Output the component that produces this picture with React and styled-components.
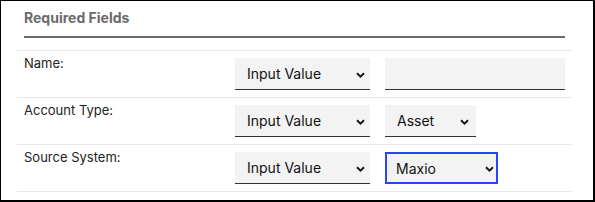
import React from 'react';
import styled, { createGlobalStyle } from 'styled-components';

const GlobalStyle = createGlobalStyle`
  body {
    margin: 0;
    background: #ffffff;
    font-family: 'Inter', 'Liberation Sans', sans-serif;
  }
`;

const Frame = styled.section`
  width: 595px;
  height: 202px;
  box-sizing: border-box;
  border-style: solid;
  border-color: #000;
  border-width: 1px 2px 2px 1px;
  padding: 8px 21px 0 16px;
  background: #fff;
`;

const Heading = styled.h3`
  margin: 0 7px 12px;
  padding-bottom: 9px;
  border-bottom: 2px solid #6b6b6b;
  font-size: 14px;
  line-height: 18px;
  font-weight: 700;
  color: #6b6b6b;
`;

const Rows = styled.div`
  border-top: 1px solid #e8e8e8;
`;

const Row = styled.div`
  display: flex;
  align-items: flex-start;
  padding: 4px 7px 7px;
  border-bottom: 1px solid #e8e8e8;
`;

const Label = styled.div`
  width: 211px;
  flex-shrink: 0;
  font-size: 13px;
  line-height: 16px;
  color: #222;
`;

const Controls = styled.div`
  display: flex;
  gap: 15px;
  margin-top: 3px;
`;

const SelectWrap = styled.div`
  position: relative;
  width: ${(p) => p.$width}px;
  height: 32px;
`;

const Select = styled.select`
  appearance: none;
  -webkit-appearance: none;
  width: 100%;
  height: 100%;
  box-sizing: border-box;
  margin: 0;
  padding: 0 24px 0 ${(p) => (p.$focused ? 9 : 12)}px;
  background: #f3f3f3;
  border: none;
  border-bottom: 1px solid #333;
  border-radius: 0;
  font-family: 'Inter', 'Liberation Sans', sans-serif;
  font-size: 14px;
  color: #111;
  outline: none;
  ${(p) => p.$focused && `border: 2px solid #2b45f2;`}
`;

const Chevron = styled.svg`
  position: absolute;
  right: ${(p) => p.$right}px;
  top: 14px;
  width: 9px;
  height: 6px;
  pointer-events: none;
`;

const TextInput = styled.input`
  width: 180px;
  height: 32px;
  box-sizing: border-box;
  margin: 0;
  padding: 0 12px;
  background: #f3f3f3;
  border: none;
  border-bottom: 1px solid #333;
  border-radius: 0;
  font-family: 'Inter', 'Liberation Sans', sans-serif;
  font-size: 14px;
  outline: none;
`;

const DropDown = ({ width, value, options, focused, chevronRight = 5 }) => (
  <SelectWrap $width={width}>
    <Select $focused={focused} defaultValue={value}>
      {options.map((o) => (
        <option key={o}>{o}</option>
      ))}
    </Select>
    <Chevron $right={chevronRight} viewBox="0 0 9 6">
      <path d="M1 1.2 L4.5 4.6 L8 1.2" fill="none" stroke="#111" strokeWidth="1.9" />
    </Chevron>
  </SelectWrap>
);

const sourceOptions = ['Input Value', 'Mapped Field'];

const App = () => (
  <>
    <GlobalStyle />
    <Frame>
      <Heading>Required Fields</Heading>
      <Rows>
        <Row>
          <Label>Name:</Label>
          <Controls>
            <DropDown width={135} value="Input Value" options={sourceOptions} />
            <TextInput type="text" />
          </Controls>
        </Row>
        <Row>
          <Label>Account Type:</Label>
          <Controls>
            <DropDown width={135} value="Input Value" options={sourceOptions} />
            <DropDown width={91} value="Asset" options={['Asset', 'Liability', 'Equity']} chevronRight={7} />
          </Controls>
        </Row>
        <Row>
          <Label>Source System:</Label>
          <Controls>
            <DropDown width={135} value="Input Value" options={sourceOptions} />
            <DropDown width={113} value="Maxio" options={['Maxio', 'Other']} focused chevronRight={4} />
          </Controls>
        </Row>
      </Rows>
    </Frame>
  </>
);

export default App;
